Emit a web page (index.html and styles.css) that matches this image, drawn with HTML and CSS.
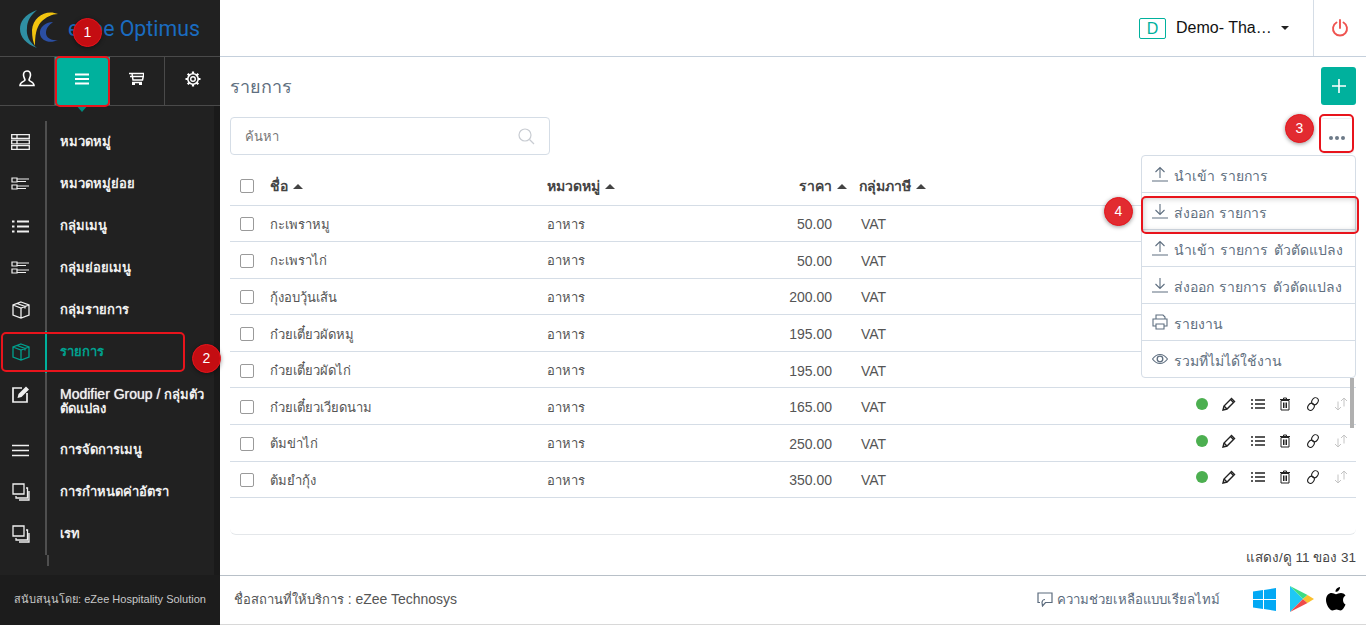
FILE: index.html
```html
<!DOCTYPE html>
<html lang="th">
<head>
    <meta charset="UTF-8">
    <title>eZee Optimus - รายการ</title>
    <link rel="stylesheet" href="styles.css">
</head>
<body>

<svg class="sprite" width="0" height="0">
    <symbol id="i-list" viewBox="0 0 14 12"><path d="M0 2h2M0 6h2M0 10h2M4 2h10M4 6h10M4 10h10" fill="none" stroke="currentColor" stroke-width="1.500"/></symbol>
    <symbol id="i-list-big" viewBox="0 0 17 13"><path d="M0 1.500h2.500M0 6.500h2.500M0 11.500h2.500M5 1.500h12M5 6.500h12M5 11.500h12" fill="none" stroke="currentColor" stroke-width="1.800"/></symbol>
    <symbol id="i-rows" viewBox="0 0 19 16"><path d="M.7.700h17.600v3.600H.7zM.7 6.200h17.600v3.600H.7zM.7 11.700h17.600v3.600H.7zM6 .7v3.600M6 6.200v3.600M6 11.700v3.600" fill="none" stroke="currentColor" stroke-width="1.300"/></symbol>
    <symbol id="i-sub" viewBox="0 0 19 14"><path d="M1 1h5v4H1zM1 8h5v4H1zM6 2h12M6 4.500h9M6 9h12M6 11.500h9" fill="none" stroke="currentColor" stroke-width="1.200"/></symbol>
    <symbol id="i-box" viewBox="0 0 18 18"><path d="M9 1l8 3v10l-8 3-8-3V4zM1 4l8 3 8-3M9 7v10M5 2.500l8 3v2" fill="none" stroke="currentColor" stroke-width="1.300"/></symbol>
    <symbol id="i-note" viewBox="0 0 18 18"><path d="M10 3H1v14h14V8" fill="none" stroke="currentColor" stroke-width="1.700"/><path d="M5.500 13l1-4L14 1.500l3 3L9.500 12z" fill="currentColor"/></symbol>
    <symbol id="i-menu" viewBox="0 0 17 13"><path d="M0 1.500h17M0 6.500h17M0 11.500h17" fill="none" stroke="currentColor" stroke-width="1.600"/></symbol>
    <symbol id="i-copy" viewBox="0 0 18 18"><path d="M1 1h11v10H1zM14 5h1.500v10H4v-2M17 8v9H7" fill="none" stroke="currentColor" stroke-width="1.300"/></symbol>
    <symbol id="i-up" viewBox="0 0 16 16"><path d="M8 12V1.500M3.500 6L8 1.500 12.500 6M0 15h16" fill="none" stroke="currentColor" stroke-width="1.100"/></symbol>
    <symbol id="i-down" viewBox="0 0 16 16"><path d="M8 1v10.500M3.500 7L8 11.500 12.500 7M0 15h16" fill="none" stroke="currentColor" stroke-width="1.100"/></symbol>
    <symbol id="i-pencil" viewBox="0 0 14 14"><path d="M1 13l1-4 7.500-7.500 3 3L5 12z" fill="none" stroke="currentColor" stroke-width="1.400"/><path d="M8.500 2.500l3 3M2 9l3 3" stroke="currentColor" stroke-width="1.400"/></symbol>
    <symbol id="i-trash" viewBox="0 0 12 14"><path d="M2 3.500h8V13H2zM1 2.500h10M4.500 2V1h3v1M4.500 5.500V11M6 5.500V11M7.500 5.500V11" fill="none" stroke="currentColor" stroke-width="1"/></symbol>
    <symbol id="i-link" viewBox="0 0 14 14"><g fill="none" stroke="currentColor" stroke-width="1.100"><ellipse cx="9" cy="4.200" rx="3" ry="3.700" transform="rotate(35 9 4.200)"/><ellipse cx="5" cy="9.800" rx="3" ry="3.700" transform="rotate(35 5 9.800)"/></g></symbol>
    <symbol id="i-sort" viewBox="0 0 14 14"><path d="M4 4.500V13M1 10l3 3 3-3M10 9.500V1M7 4l3-3 3 3" fill="none" stroke="currentColor" stroke-width="1"/></symbol>
</svg>

<aside class="sidebar">
    <div class="logo">
        <svg class="logo-mark" width="40" height="44" viewBox="0 0 40 44">
            <path d="M18 4C5 9 1 16 1 23c0 8 6 15 17 19-8-6-11-13-10-20 0-7 4-13 10-18z" fill="#2f8fa3"/>
            <path d="M39 8C28 3 14 10 13 24c0 7 1 12 3 16 0-10 1-18 6-24 5-5 11-8 17-8z" fill="#f2c40f"/>
            <path d="M34 16c-8 0-14 6-13 12 1 7 10 10 18 6-6 1-12-2-12-7 0-5 3-8 7-11z" fill="#2b4fa3"/>
        </svg>
        <span class="logo-text">eZee Optimus</span>
    </div>
    <nav class="tabs">
        <a class="tab"><svg width="16" height="17" viewBox="0 0 16 17"><path d="M8 1c2.500 0 3.500 2 3.500 4S10 9 10 10c0 1.500 5 1.500 5 5.500H1C1 11.500 6 11.500 6 10 6 9 4.500 7 4.500 5S5.500 1 8 1z" fill="none" stroke="currentColor" stroke-width="1.600"/></svg></a>
        <a class="tab tab-active"><svg width="14" height="12" viewBox="0 0 14 12"><path d="M0 1.500h14M0 6h14M0 10.500h14" fill="none" stroke="currentColor" stroke-width="2"/></svg></a>
        <a class="tab tab-cart"><svg width="15" height="13" viewBox="0 0 15 13"><path d="M0 1.500h15L13.500 8H4L3 1.500M1 4.500h13M3 10.500h10" fill="none" stroke="currentColor" stroke-width="1.500"/><path d="M3 10h3v3H3zM10 10h3v3h-3z" fill="currentColor"/></svg></a>
        <a class="tab"><svg width="16" height="16" viewBox="0 0 16 16"><circle cx="8" cy="8" r="2.300" fill="none" stroke="currentColor" stroke-width="1.400"/><circle cx="8" cy="8" r="5.200" fill="none" stroke="currentColor" stroke-width="1.600"/><path d="M8 .5v2.500M8 13v2.500M.5 8H3M13 8h2.500M2.700 2.700l1.800 1.800M11.500 11.500l1.800 1.800M2.700 13.300l1.800-1.800M11.500 4.500l1.800-1.800" stroke="currentColor" stroke-width="2.200"/></svg></a>
    </nav>
    <div class="side-scroll">
        <ul class="menu">
            <li class="menu-item"><span class="menu-icon"><svg width="19" height="16"><use href="#i-rows"/></svg></span><span class="menu-label">หมวดหมู่</span></li>
            <li class="menu-item"><span class="menu-icon"><svg width="19" height="14"><use href="#i-sub"/></svg></span><span class="menu-label">หมวดหมู่ย่อย</span></li>
            <li class="menu-item"><span class="menu-icon"><svg width="17" height="13"><use href="#i-list-big"/></svg></span><span class="menu-label">กลุ่มเมนู</span></li>
            <li class="menu-item"><span class="menu-icon"><svg width="19" height="14"><use href="#i-sub"/></svg></span><span class="menu-label">กลุ่มย่อยเมนู</span></li>
            <li class="menu-item"><span class="menu-icon"><svg width="18" height="18"><use href="#i-box"/></svg></span><span class="menu-label">กลุ่มรายการ</span></li>
            <li class="menu-item menu-active"><span class="menu-icon"><svg width="18" height="18"><use href="#i-box"/></svg></span><span class="menu-label">รายการ</span></li>
            <li class="menu-item menu-tall"><span class="menu-icon"><svg width="18" height="18"><use href="#i-note"/></svg></span><span class="menu-label"><span class="menu-latin">Modifier Group /</span> กลุ่มตัวตัดแปลง</span></li>
            <li class="menu-item"><span class="menu-icon"><svg width="17" height="13"><use href="#i-menu"/></svg></span><span class="menu-label">การจัดการเมนู</span></li>
            <li class="menu-item"><span class="menu-icon"><svg width="18" height="18"><use href="#i-copy"/></svg></span><span class="menu-label">การกำหนดค่าอัตรา</span></li>
            <li class="menu-item"><span class="menu-icon"><svg width="18" height="18"><use href="#i-copy"/></svg></span><span class="menu-label">เรท</span></li>
        </ul>
    </div>
    <div class="side-foot">สนับสนุนโดย: eZee Hospitality Solution</div>
</aside>

<div class="main">
    <header class="topbar">
        <div class="outlet">
            <span class="outlet-badge">D</span>
            <span class="outlet-name">Demo- Thai Restaurant</span>
            <span class="caret"></span>
        </div>
        <a class="power">
            <svg width="18" height="18" viewBox="0 0 18 18"><path d="M5.500 3.500a7 7 0 107 0M9 1v8" fill="none" stroke="#ef5350" stroke-width="1.900" stroke-linecap="round"/></svg>
        </a>
    </header>

    <section class="content">
        <div class="title-row">
            <h1>รายการ</h1>
            <button class="btn-add"><svg width="16" height="16"><path d="M8 1v14M1 8h14" stroke="#fff" stroke-width="1.600"/></svg></button>
        </div>
        <div class="tools-row">
            <div class="search">
                <span>ค้นหา</span>
                <svg width="17" height="17" viewBox="0 0 17 17"><circle cx="7" cy="7" r="6" fill="none" stroke="#c8ccd2" stroke-width="1.200"/><path d="M11.500 11.500L16 16" stroke="#c8ccd2" stroke-width="1.200"/></svg>
            </div>
            <button class="btn-more"><i></i><i></i><i></i></button>
        </div>

        <div class="table-wrap">
            <table class="items">
                <thead>
                    <tr>
                        <th class="col-check"><span class="check"></span></th>
                        <th class="col-name">ชื่อ<span class="sort"></span></th>
                        <th class="col-cat">หมวดหมู่<span class="sort"></span></th>
                        <th class="col-price">ราคา<span class="sort"></span></th>
                        <th class="col-tax">กลุ่มภาษี<span class="sort"></span></th>
                        <th></th>
                    </tr>
                </thead>
                <tbody>
                    <tr><td><span class="check"></span></td><td>กะเพราหมู</td><td>อาหาร</td><td class="col-price">50.00</td><td class="col-tax">VAT</td><td class="actions"><i class="dot"></i><svg width="14" height="14"><use href="#i-pencil"/></svg><svg width="14" height="12"><use href="#i-list"/></svg><svg width="12" height="14"><use href="#i-trash"/></svg><svg width="14" height="14"><use href="#i-link"/></svg><svg class="muted" width="14" height="14"><use href="#i-sort"/></svg></td></tr>
                    <tr><td><span class="check"></span></td><td>กะเพราไก่</td><td>อาหาร</td><td class="col-price">50.00</td><td class="col-tax">VAT</td><td class="actions"><i class="dot"></i><svg width="14" height="14"><use href="#i-pencil"/></svg><svg width="14" height="12"><use href="#i-list"/></svg><svg width="12" height="14"><use href="#i-trash"/></svg><svg width="14" height="14"><use href="#i-link"/></svg><svg class="muted" width="14" height="14"><use href="#i-sort"/></svg></td></tr>
                    <tr><td><span class="check"></span></td><td>กุ้งอบวุ้นเส้น</td><td>อาหาร</td><td class="col-price">200.00</td><td class="col-tax">VAT</td><td class="actions"><i class="dot"></i><svg width="14" height="14"><use href="#i-pencil"/></svg><svg width="14" height="12"><use href="#i-list"/></svg><svg width="12" height="14"><use href="#i-trash"/></svg><svg width="14" height="14"><use href="#i-link"/></svg><svg class="muted" width="14" height="14"><use href="#i-sort"/></svg></td></tr>
                    <tr><td><span class="check"></span></td><td>ก๋วยเตี๋ยวผัดหมู</td><td>อาหาร</td><td class="col-price">195.00</td><td class="col-tax">VAT</td><td class="actions"><i class="dot"></i><svg width="14" height="14"><use href="#i-pencil"/></svg><svg width="14" height="12"><use href="#i-list"/></svg><svg width="12" height="14"><use href="#i-trash"/></svg><svg width="14" height="14"><use href="#i-link"/></svg><svg class="muted" width="14" height="14"><use href="#i-sort"/></svg></td></tr>
                    <tr><td><span class="check"></span></td><td>ก๋วยเตี๋ยวผัดไก่</td><td>อาหาร</td><td class="col-price">195.00</td><td class="col-tax">VAT</td><td class="actions"><i class="dot"></i><svg width="14" height="14"><use href="#i-pencil"/></svg><svg width="14" height="12"><use href="#i-list"/></svg><svg width="12" height="14"><use href="#i-trash"/></svg><svg width="14" height="14"><use href="#i-link"/></svg><svg class="muted" width="14" height="14"><use href="#i-sort"/></svg></td></tr>
                    <tr><td><span class="check"></span></td><td>ก๋วยเตี๋ยวเวียดนาม</td><td>อาหาร</td><td class="col-price">165.00</td><td class="col-tax">VAT</td><td class="actions"><i class="dot"></i><svg width="14" height="14"><use href="#i-pencil"/></svg><svg width="14" height="12"><use href="#i-list"/></svg><svg width="12" height="14"><use href="#i-trash"/></svg><svg width="14" height="14"><use href="#i-link"/></svg><svg class="muted" width="14" height="14"><use href="#i-sort"/></svg></td></tr>
                    <tr><td><span class="check"></span></td><td>ต้มข่าไก่</td><td>อาหาร</td><td class="col-price">250.00</td><td class="col-tax">VAT</td><td class="actions"><i class="dot"></i><svg width="14" height="14"><use href="#i-pencil"/></svg><svg width="14" height="12"><use href="#i-list"/></svg><svg width="12" height="14"><use href="#i-trash"/></svg><svg width="14" height="14"><use href="#i-link"/></svg><svg class="muted" width="14" height="14"><use href="#i-sort"/></svg></td></tr>
                    <tr><td><span class="check"></span></td><td>ต้มยำกุ้ง</td><td>อาหาร</td><td class="col-price">350.00</td><td class="col-tax">VAT</td><td class="actions"><i class="dot"></i><svg width="14" height="14"><use href="#i-pencil"/></svg><svg width="14" height="12"><use href="#i-list"/></svg><svg width="12" height="14"><use href="#i-trash"/></svg><svg width="14" height="14"><use href="#i-link"/></svg><svg class="muted" width="14" height="14"><use href="#i-sort"/></svg></td></tr>
                </tbody>
            </table>
        </div>
        <div class="paging">แสดง/ดู 11 ของ 31</div>

        <ul class="dropdown">
            <li><svg width="16" height="16"><use href="#i-up"/></svg>นำเข้า รายการ</li>
            <li><svg width="16" height="16"><use href="#i-down"/></svg>ส่งออก รายการ</li>
            <li><svg width="16" height="16"><use href="#i-up"/></svg>นำเข้า รายการ ตัวตัดแปลง</li>
            <li><svg width="16" height="16"><use href="#i-down"/></svg>ส่งออก รายการ ตัวตัดแปลง</li>
            <li><svg width="16" height="16" viewBox="0 0 16 16"><path d="M4 5V1h7l2 2v2M4 12H1V5h14v7h-3M4 10h8v5H4z" fill="none" stroke="currentColor" stroke-width="1.100"/></svg>รายงาน</li>
            <li><svg width="16" height="16" viewBox="0 0 16 16"><path d="M0.500 8C3 4.500 5.500 3.500 8 3.500s5 1 7.500 4.500c-2.500 3.500-5 4.500-7.500 4.500S3 11.500.5 8z" fill="none" stroke="currentColor" stroke-width="1.100"/><circle cx="8" cy="8" r="2.800" fill="none" stroke="currentColor" stroke-width="1.300"/></svg>รวมที่ไม่ได้ใช้งาน</li>
        </ul>
        <div class="scroll-thumb"></div>
    </section>

    <footer class="foot">
        <span class="foot-place">ชื่อสถานที่ให้บริการ <span class="foot-latin">: eZee Technosys</span></span>
        <a class="foot-help">
            <svg width="16" height="15" viewBox="0 0 16 15"><path d="M3 10.500H1V1h14v9.500H8.500L5.500 14l-.5-3.500a3 3 0 013-3" fill="none" stroke="#5b6b7d" stroke-width="1.200"/></svg>
            ความช่วยเหลือแบบเรียลไทม์
        </a>
        <div class="stores">
            <svg class="store-win" width="23" height="23" viewBox="0 0 23 23"><path d="M0 3.500l10-1.400V11H0zM11 2l12-2v11H11zM0 12h10v9L0 19.600zM11 12h12v11l-12-2z" fill="#03a9f4"/></svg>
            <svg width="24" height="26" viewBox="0 0 24 26"><path d="M0 0l13 13L0 26z" fill="#1fc8f5"/><path d="M0 0l17.500 9L13 13z" fill="#3ddc84"/><path d="M0 26l17.500-9L13 13z" fill="#ef4a4a"/><path d="M17.500 9l6.500 4-6.500 4L13 13z" fill="#fbc02d"/></svg>
            <svg width="20" height="24" viewBox="0 0 20 24"><path d="M14 0c.2 2.500-2 5-4.500 4.800C9.300 2.500 11.700.2 14 0zM19.500 17.500c-1 2.500-3 6-5 6-1.500 0-2.300-1-4-1s-2.700 1-4 1C3.500 23.500 0 17.500 0 13c0-4.500 3-7 5.500-7 1.800 0 3.300 1.200 4.500 1.200S13 6 15 6c1.500 0 3.300.7 4.500 2.500-3.500 2-3 7.500 0 9z" fill="#000"/></svg>
        </div>
    </footer>
</div>

<!-- numbered callouts drawn over the screenshot -->
<div class="mark mark-tab"></div>
<div class="mark mark-item"></div>
<div class="mark mark-more"></div>
<div class="mark mark-export"></div>
<span class="pin pin-1">1</span>
<span class="pin pin-2">2</span>
<span class="pin pin-3">3</span>
<span class="pin pin-4">4</span>

</body>
</html>
```

FILE: styles.css
```css
* {
    box-sizing: border-box;
}
html, body {
    height: 100%;
}
body {
    margin: 0;
    display: flex;
    position: relative;
    overflow: hidden;
    background: #fff;
    font-family: "Liberation Sans", "Noto Sans", sans-serif;
    font-size: 13px;
    color: #555;
}
.sprite {
    position: absolute;
}
ul {
    list-style: none;
    margin: 0;
    padding: 0;
}

/* sidebar */
.sidebar {
    width: 220px;
    flex: none;
    display: flex;
    flex-direction: column;
    background: #212121;
    color: #f0f0f0;
}
.logo {
    height: 57px;
    flex: none;
    display: flex;
    align-items: center;
    padding-left: 19px;
    gap: 9px;
    border-bottom: 1px solid #4a4a4a;
}
.logo-text {
    font-family: "Roboto", sans-serif;
    font-size: 21.300px;
    color: #1a6cc0;
}
.tabs {
    height: 49px;
    flex: none;
    display: flex;
    border-bottom: 1px solid #4a4a4a;
}
.tab {
    width: 55px;
    display: flex;
    align-items: center;
    justify-content: center;
    padding-bottom: 5px;
    border-right: 1px solid #4a4a4a;
    color: #fff;
    position: relative;
}
.tab:last-child {
    border-right: none;
}
.tab-active {
    background: #00b19d;
    border-right: none;
}
.tab-cart {
    width: 56px;
}
.tab-active::after {
    content: "";
    position: absolute;
    left: 50%;
    bottom: -7px;
    margin-left: -6px;
    border-left: 6px solid transparent;
    border-right: 6px solid transparent;
    border-top: 7px solid #00897b;
}
.side-scroll {
    flex: 1;
    padding: 15px 0 0;
    border-right: 6px solid #1a1a1a;
}
.menu {
    width: 214px;
}
.menu::after {
    content: "";
    display: block;
    width: 47px;
    height: 11px;
    border-right: 2px solid #4f4f4f;
}
.menu-item {
    height: 42px;
    display: flex;
    align-items: center;
    font-weight: bold;
    color: #f0f0f0;
}
.menu-tall {
    height: 56px;
}
.menu-icon {
    width: 47px;
    height: 100%;
    flex: none;
    display: flex;
    align-items: center;
    justify-content: center;
    padding-right: 4px;
    border-right: 2px solid #4f4f4f;
}
.menu-label {
    padding-left: 13px;
    line-height: 14px;
}
.menu-latin {
    font-size: 14px;
    font-weight: normal;
    text-shadow: 0 0 1px #f0f0f0;
}
.menu-tall .menu-icon {
    align-items: flex-start;
    padding-top: 12px;
}
.menu-active {
    color: #00a08e;
}
.menu-active .menu-icon {
    border-right-color: #00b19d;
}
.side-foot {
    height: 50px;
    flex: none;
    display: flex;
    align-items: center;
    justify-content: center;
    padding-bottom: 2px;
    background: #1c1c1c;
    font-size: 11px;
    color: #c8c8c8;
}

/* main column */
.main {
    flex: 1;
    min-width: 0;
    display: flex;
    flex-direction: column;
}
.topbar {
    height: 57px;
    flex: none;
    display: flex;
    justify-content: flex-end;
    border-bottom: 1px solid #c5d0dc;
}
.outlet {
    display: flex;
    align-items: center;
    padding-right: 24px;
}
.outlet-badge {
    width: 27px;
    height: 21px;
    border: 1px solid #00b19d;
    border-radius: 2px;
    color: #00b19d;
    font-size: 16px;
    line-height: 19px;
    text-align: center;
    margin-right: 10px;
}
.outlet-name {
    width: 99px;
    overflow: hidden;
    white-space: nowrap;
    text-overflow: ellipsis;
    font-size: 16px;
    color: #111;
}
.caret {
    margin-left: 6px;
    border-left: 4px solid transparent;
    border-right: 4px solid transparent;
    border-top: 4px solid #222;
}
.power {
    width: 53px;
    display: flex;
    align-items: center;
    justify-content: center;
    border-left: 1px solid #d5dde6;
}
.content {
    flex: 1;
    min-height: 0;
    display: flex;
    flex-direction: column;
    padding: 10px 10px 0;
    position: relative;
}
.title-row {
    display: flex;
    justify-content: space-between;
    align-items: center;
    height: 38px;
}
h1 {
    margin: 0;
    font-size: 18px;
    font-weight: normal;
    color: #5f6f80;
}
.btn-add {
    width: 35px;
    height: 38px;
    border: none;
    border-radius: 3px;
    background: #00b19d;
    display: flex;
    align-items: center;
    justify-content: center;
    padding: 0;
}
.tools-row {
    display: flex;
    justify-content: space-between;
    align-items: center;
    margin-top: 12px;
    height: 38px;
}
.search {
    width: 320px;
    height: 38px;
    display: flex;
    justify-content: space-between;
    align-items: center;
    padding: 0 14px;
    border: 1px solid #d5dde6;
    border-radius: 4px;
    color: #777;
}
.btn-more {
    width: 34px;
    height: 36px;
    margin-right: 2px;
    display: flex;
    align-items: center;
    justify-content: center;
    gap: 2px;
    border: 1px solid #eef0f3;
    border-radius: 3px;
    background: #fff;
    padding: 4px 0 0;
}
.btn-more i {
    width: 4px;
    height: 4px;
    border-radius: 50%;
    background: #6d7a88;
}

/* table */
.table-wrap {
    height: 367px;
    margin-top: 13px;
    border-bottom: 1px solid #e4e7ea;
    border-radius: 0 0 6px 6px;
    overflow: hidden;
}
.items {
    width: 100%;
    border-collapse: collapse;
    table-layout: fixed;
}
.items th, .items td {
    padding: 0;
    border-bottom: 1px solid #d5dde6;
    text-align: left;
    color: #555;
}
.items th {
    height: 37px;
    font-size: 14px;
    font-weight: bold;
    color: #444;
}
.items td {
    height: 36.600px;
    padding-top: 2px;
}
.col-check {
    width: 40px;
}
.col-name {
    width: 277px;
}
.col-cat {
    width: 200px;
}
.items .col-price {
    width: 100px;
    text-align: right;
}
.items td.col-price {
    padding-right: 15px;
    font-size: 14px;
}
.items .col-tax {
    width: 110px;
    padding-left: 12px;
}
.items td.col-tax {
    padding-left: 14px;
    font-size: 14px;
}
.check {
    display: block;
    width: 14px;
    height: 14px;
    margin-left: 10px;
    border: 1.500px solid #9a9a9a;
    border-radius: 2px;
}
.sort {
    display: inline-block;
    margin-left: 5px;
    vertical-align: 2px;
    border-left: 5px solid transparent;
    border-right: 5px solid transparent;
    border-bottom: 5px solid #444;
}
.items .actions {
    padding: 0 8px 6px 0;
    text-align: right;
    color: #222;
    white-space: nowrap;
}
.actions svg {
    margin-left: 14.500px;
    vertical-align: middle;
}
.items .actions .muted {
    color: #c4c4c4;
}
.dot {
    display: inline-block;
    width: 12px;
    height: 12px;
    border-radius: 50%;
    background: #4caf50;
    vertical-align: middle;
}
.paging {
    margin-top: 11px;
    text-align: right;
    font-size: 13.500px;
    color: #444;
}
.dropdown {
    position: absolute;
    right: 10px;
    top: 98px;
    width: 215px;
    border: 1px solid #d5dde6;
    border-radius: 4px;
    background: #fff;
    font-size: 14px;
    word-spacing: 1.500px;
    color: #5f6f80;
    z-index: 2;
}
.dropdown li {
    height: 37px;
    display: flex;
    align-items: center;
    gap: 6px;
    padding: 3px 0 0 10px;
    border-bottom: 1px solid #d5dde6;
    white-space: nowrap;
}
.dropdown li svg {
    margin-top: -4px;
}
.dropdown li:last-child {
    height: 36px;
    border-bottom: none;
}
.scroll-thumb {
    position: absolute;
    right: 12px;
    top: 321px;
    width: 4px;
    height: 50px;
    background: #b0b0b0;
}

/* footer */
.foot {
    height: 50px;
    flex: none;
    display: flex;
    align-items: center;
    padding: 0 20px 2px 14px;
    border-top: 1px solid #b8c0c8;
    border-bottom: 1px solid #d8d8d8;
}
.foot-place {
    flex: 1;
}
.foot-latin {
    font-size: 14px;
}
.foot-help {
    display: flex;
    align-items: center;
    gap: 4px;
    font-size: 13.200px;
    color: #5b6b7d;
}
.stores {
    display: flex;
    align-items: center;
    gap: 12px;
    margin-left: 33px;
}
.store-win {
    margin-right: 2px;
}

/* callouts */
.mark {
    position: absolute;
    border: 2px solid #e8141c;
    border-radius: 5px;
    z-index: 3;
}
.mark-tab {
    left: 55px;
    top: 56px;
    width: 55px;
    height: 51px;
}
.mark-item {
    left: 1px;
    top: 332px;
    width: 184px;
    height: 40px;
}
.mark-more {
    left: 1319px;
    top: 114px;
    width: 35px;
    height: 39px;
}
.mark-export {
    left: 1141px;
    top: 196px;
    width: 218px;
    height: 38px;
    box-shadow: inset 0 0 6px rgba(0, 0, 0, 0.25);
}
.pin {
    position: absolute;
    width: 29px;
    height: 29px;
    border-radius: 50%;
    background: #e22b30;
    border: 1px solid #e8141c;
    box-shadow: 0 1px 4px rgba(0, 0, 0, 0.4);
    color: #fff;
    font-size: 14px;
    line-height: 27px;
    text-align: center;
    z-index: 4;
}
.pin-1 {
    left: 73px;
    top: 18px;
    background: #c40d12;
}
.pin-2 {
    left: 192px;
    top: 344px;
    background: #c40d12;
}
.pin-3 {
    left: 1285px;
    top: 114px;
}
.pin-4 {
    left: 1104px;
    top: 197px;
}
```
